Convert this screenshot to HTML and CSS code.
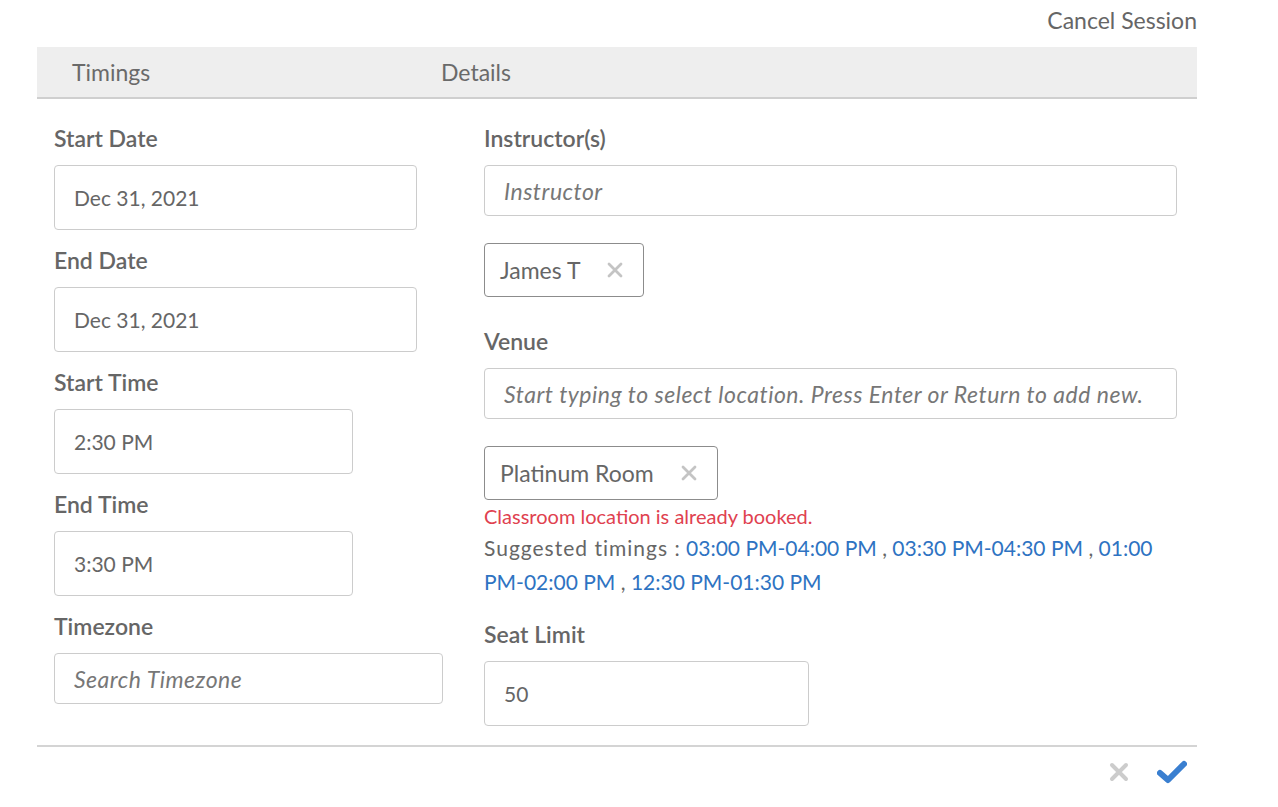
FILE: index.html
```html
<!DOCTYPE html>
<html>
<head>
<meta charset="utf-8">
<link rel="stylesheet" href="styles.css">
</head>
<body>
<div class="page">
  <div class="top"><span class="cancel">Cancel Session</span></div>
  <div class="tabs">
    <div class="tab tab-left">Timings</div>
    <div class="tab tab-right">Details</div>
  </div>
  <div class="body">
    <div class="col col-left">
      <div class="field">
        <div class="label">Start Date</div>
        <div class="input tall">Dec 31, 2021</div>
      </div>
      <div class="field">
        <div class="label">End Date</div>
        <div class="input tall">Dec 31, 2021</div>
      </div>
      <div class="field">
        <div class="label">Start Time</div>
        <div class="input tall narrow">2:30 PM</div>
      </div>
      <div class="field">
        <div class="label">End Time</div>
        <div class="input tall narrow">3:30 PM</div>
      </div>
      <div class="field">
        <div class="label">Timezone</div>
        <div class="input short wide placeholder">Search Timezone</div>
      </div>
    </div>
    <div class="col col-right">
      <div class="label">Instructor(s)</div>
      <div class="input short placeholder">Instructor</div>
      <div class="chip chip-james"><span>James T</span><svg class="chip-x" width="16" height="16" viewBox="0 0 16 16"><path d="M2 2 L14 14 M14 2 L2 14" stroke="#c4c4c4" stroke-width="2.8" stroke-linecap="round"/></svg></div>
      <div class="label venue-label">Venue</div>
      <div class="input short placeholder">Start typing to select location. Press Enter or Return to add new.</div>
      <div class="chip chip-room"><span>Platinum Room</span><svg class="chip-x" width="16" height="16" viewBox="0 0 16 16"><path d="M2 2 L14 14 M14 2 L2 14" stroke="#c4c4c4" stroke-width="2.8" stroke-linecap="round"/></svg></div>
      <div class="error">Classroom location is already booked.</div>
      <div class="suggest"><div class="line"><span class="prefix">Suggested timings :</span> <span class="link">03:00 PM-04:00 PM</span> , <span class="link">03:30 PM-04:30 PM</span> , <span class="link">01:00</span></div><div class="line"><span class="link">PM-02:00 PM</span> , <span class="link">12:30 PM-01:30 PM</span></div></div>
      <div class="label seat-label">Seat Limit</div>
      <div class="input tall seat">50</div>
    </div>
  </div>
  <div class="footer">
    <svg class="icon-x" width="20" height="20" viewBox="0 0 20 20"><path d="M3 3 L17 17 M17 3 L3 17" stroke="#cccccc" stroke-width="4" stroke-linecap="round"/></svg>
    <svg class="icon-check" width="30" height="24" viewBox="0 0 30 24"><path d="M3 13 L11 20 L27 4" fill="none" stroke="#3a7fd0" stroke-width="6" stroke-linecap="round" stroke-linejoin="round"/></svg>
  </div>
</div>
</body>
</html>
```
FILE: styles.css
```css
html, body {
  margin: 0;
  padding: 0;
  background: #ffffff;
}
body {
  font-family: Lato, "Open Sans", sans-serif;
  color: #666666;
}
.page {
  width: 1160px;
  margin-left: 37px;
}
.top {
  height: 47px;
  display: flex;
  justify-content: flex-end;
  align-items: flex-start;
}
.cancel {
  font-size: 23px;
  line-height: 40px;
  color: #666666;
}
.tabs {
  height: 50px;
  background: #eeeeee;
  border-bottom: 2px solid #cfcfcf;
  display: flex;
  align-items: center;
  font-size: 23px;
  color: #6a6a6a;
}
.tab-left {
  padding-left: 35px;
  width: 369px;
}
.body {
  display: flex;
  padding-top: 24px;
}
.col-left {
  width: 430px;
  padding-left: 17px;
}
.col-right {
  width: 693px;
}
.field {
  margin-bottom: 15px;
}
.label {
  font-size: 23px;
  font-weight: 600;
  line-height: 30px;
  height: 30px;
  margin-bottom: 12px;
  color: #666666;
}
.input {
  box-sizing: border-box;
  border: 1.5px solid #cccccc;
  border-radius: 4px;
  padding-left: 19px;
  display: flex;
  align-items: center;
  font-size: 21px;
  color: #666666;
  background: #fff;
}
.tall {
  height: 65px;
  width: 363px;
}
.short {
  height: 51px;
}
.narrow {
  width: 299px;
}
.wide {
  width: 389px;
}
.placeholder {
  font-style: italic;
  font-size: 23px;
  letter-spacing: 0.5px;
  color: #777777;
}
.chip {
  box-sizing: border-box;
  height: 54px;
  border: 1.5px solid #8c8c8c;
  border-radius: 4px;
  display: flex;
  align-items: center;
  padding-left: 15px;
  font-size: 23px;
  color: #666666;
  margin-top: 27px;
}
.chip-james {
  width: 160px;
}
.chip-room {
  width: 234px;
}
.chip-x {
  margin-left: auto;
  margin-right: 20px;
}
.venue-label {
  margin-top: 29px;
}
.error {
  color: #e0414f;
  font-size: 20px;
  line-height: 24px;
  margin-top: 4px;
}
.suggest {
  font-size: 21px;
  line-height: 34px;
  margin-top: 3px;
  color: #666666;
}
.line {
  white-space: nowrap;
}
.prefix {
  letter-spacing: 1px;
}
.link {
  color: #2e73c2;
}
.seat-label {
  margin-top: 20px;
}
.seat {
  width: 325px;
  margin-bottom: 19px;
}
.footer {
  border-top: 2px solid #d4d4d4;
  display: flex;
  justify-content: flex-end;
  align-items: center;
  height: 50px;
  gap: 28px;
  padding-right: 10px;
}
```
